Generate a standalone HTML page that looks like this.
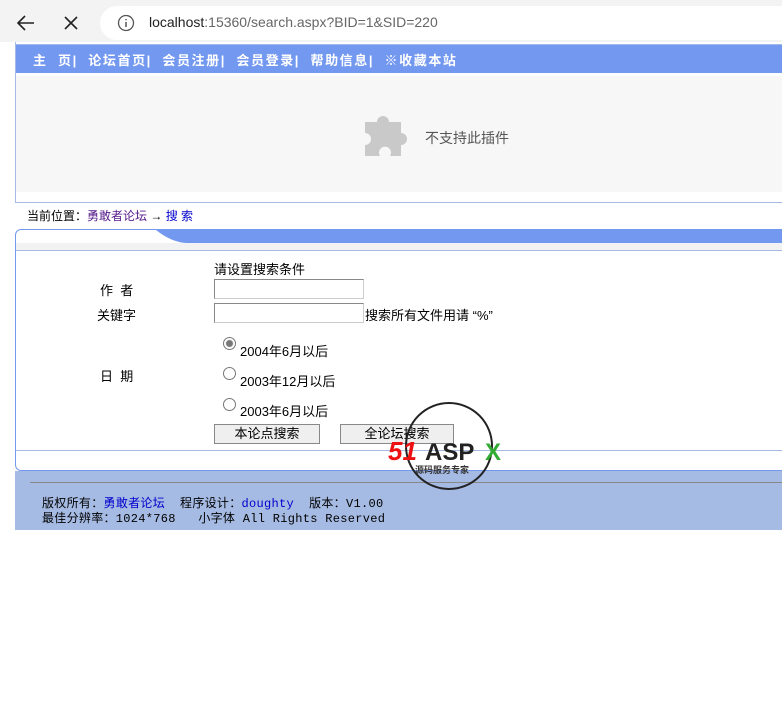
<!DOCTYPE html>
<html><head><meta charset="utf-8"><style>
*{margin:0;padding:0;box-sizing:border-box}
body{width:782px;height:720px;background:#fff;font-family:"Liberation Sans","Noto Sans CJK SC",sans-serif;font-size:12px;position:relative;overflow:hidden;color:#000}
.abs{position:absolute}
.chrome{left:0;top:0;width:782px;height:42px;background:#f3f3f3}
.url{left:100px;top:6px;width:700px;height:34px;background:#fff;border-radius:17px}
.nav{left:16px;top:44px;width:766px;height:29px;background:#7398f0;border-top:1px solid #a0b8ea;color:#fff;font-weight:bold;font-size:13px;padding:5px 0 0 17px;letter-spacing:1.6px;white-space:nowrap}
.plug{left:16px;top:76px;width:766px;height:116px;background:#f7f7f7}
.inp{background:#fff;border:1px solid #888;border-right-color:#ccc;border-bottom-color:#ccc;height:20px;width:150px}
.btn{background:#efefef;border:1px solid #888;height:20px;font-size:13px;text-align:center;line-height:18px}
.radio{width:13px;height:13px;border:1px solid #777;border-radius:50%;background:#fff}
.t13{font-size:13px}
.mono{font-family:"Liberation Mono","Noto Sans CJK SC",monospace;font-size:12px;letter-spacing:0.3px}
</style></head><body>
<div class="abs chrome"></div>
<div class="abs url"></div>
<svg class="abs" style="left:14px;top:12px" width="24" height="22"><path d="M20 11H4M11 4L4 11l7 7" stroke="#222" stroke-width="1.6" fill="none"/></svg>
<svg class="abs" style="left:62px;top:14px" width="18" height="18"><path d="M3 3l12 12M15 3L3 15" stroke="#222" stroke-width="1.6"/></svg>
<svg class="abs" style="left:117px;top:14px" width="18" height="18"><circle cx="9" cy="9" r="7.5" stroke="#555" stroke-width="1.3" fill="none"/><path d="M9 8v5M9 5v1.2" stroke="#555" stroke-width="1.5"/></svg>
<div class="abs" style="left:149px;top:14px;font-size:14px;color:#222">localhost<span style="color:#666">:15360/search.aspx?BID=1&amp;SID=220</span></div>
<div class="abs" style="left:15px;top:42px;width:767px;height:161px;border-left:1px solid #a6bbe3;border-bottom:1px solid #a6bbe3"></div>
<div class="abs nav">主&nbsp;&nbsp;页|&nbsp; 论坛首页|&nbsp; 会员注册|&nbsp; 会员登录|&nbsp; 帮助信息|&nbsp; ※收藏本站</div>
<div class="abs plug"></div>
<svg class="abs" style="left:362px;top:112px" width="48" height="48" viewBox="0 0 48 48"><path d="M2 10h12a6 6 0 1 1 12 0h12v11a6 6 0 1 1 0 12v11H27a6 6 0 1 0-10 0H2V33a6 6 0 1 0 0-12z" fill="#c9c9c9" transform="translate(1 0)"/></svg>
<div class="abs" style="left:425px;top:128px;font-size:14px;color:#555">不支持此插件</div>
<div class="abs" style="left:27px;top:207px;font-size:12px">当前位置：<span style="color:#551a8b">勇敢者论坛</span> → <span style="color:#00c">搜 索</span></div>
<div class="abs" style="left:15px;top:229px;width:767px;height:242px;border:1px solid #7398f0;border-right:none;border-radius:6px 0 0 6px"></div>
<svg class="abs" style="left:16px;top:229px" width="766" height="22"><path d="M140 1Q155 13 170 14H766V1z" fill="#7398f0"/><rect x="0" y="14" width="766" height="8" fill="#f2f2f2"/><rect x="0" y="21" width="766" height="1" fill="#a6bbe3"/></svg>
<div class="abs" style="left:16px;top:450px;width:766px;height:20px;border-top:1px solid #a6bbe3;background:#fff;border-radius:0 0 0 6px"></div>
<div class="abs t13" style="left:214px;top:259px">请设置搜索条件</div>
<div class="abs t13" style="left:100px;top:280px">作&nbsp;&nbsp;者</div>
<div class="abs inp" style="left:214px;top:279px"></div>
<div class="abs t13" style="left:97px;top:305px">关键字</div>
<div class="abs inp" style="left:214px;top:303px"></div>
<div class="abs t13" style="left:365px;top:305px">搜索所有文件用请 “%”</div>
<div class="abs t13" style="left:100px;top:366px">日&nbsp;&nbsp;期</div>
<div class="abs radio" style="left:223px;top:337px;background:radial-gradient(circle,#777 3px,#fff 4px)"></div>
<div class="abs t13" style="left:240px;top:341px">2004年6月以后</div>
<div class="abs radio" style="left:223px;top:367px"></div>
<div class="abs t13" style="left:240px;top:371px">2003年12月以后</div>
<div class="abs radio" style="left:223px;top:398px"></div>
<div class="abs t13" style="left:240px;top:401px">2003年6月以后</div>
<div class="abs btn" style="left:214px;top:424px;width:106px">本论点搜索</div>
<div class="abs btn" style="left:340px;top:424px;width:114px">全论坛搜索</div>
<div class="abs" style="left:15px;top:471px;width:767px;height:59px;background:#a6bbe3"></div>
<div class="abs" style="left:30px;top:482px;width:752px;height:1px;background:#888"></div>
<div class="abs mono" style="left:42px;top:494px;white-space:pre">版权所有：<span style="color:#00c">勇敢者论坛</span>  程序设计：<span style="color:#00c">doughty</span>  版本：V1.00</div>
<div class="abs mono" style="left:42px;top:509px;white-space:pre">最佳分辨率：1024*768   小字体 All Rights Reserved</div>
<svg class="abs" style="left:385px;top:400px" width="130" height="95"><circle cx="64" cy="46" r="43" fill="none" stroke="#222" stroke-width="2"/><text x="3" y="60" font-family="Liberation Sans" font-weight="bold" font-style="italic" font-size="26" fill="#e11">51</text><text x="40" y="60" font-family="Liberation Sans" font-weight="bold" font-size="24" fill="#222">ASP</text><text x="100" y="60" font-family="Liberation Sans" font-weight="bold" font-size="24" fill="#3a3">X</text><text x="30" y="73" font-family="Noto Sans CJK SC" font-size="9" font-weight="bold" fill="#333">源码服务专家</text></svg>
</body></html>
